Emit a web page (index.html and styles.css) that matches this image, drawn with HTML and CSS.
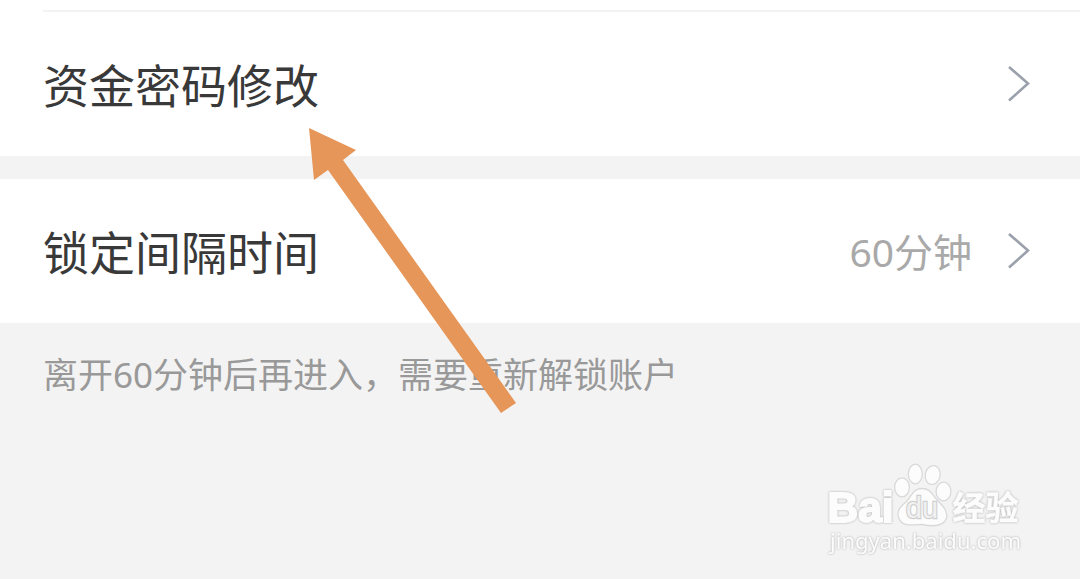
FILE: index.html
```html
<!DOCTYPE html>
<html lang="zh-CN">
<head>
<meta charset="utf-8">
<title>资金密码修改</title>
<link rel="stylesheet" href="styles.css">
</head>
<body>
<main class="screen">
  <div class="divider"></div>
  <section class="row row-password">
    <span class="title">资金密码修改</span>
    <svg class="chevron" viewBox="0 0 22 36"><path d="M1 1 20 17.5 1 34.5"/></svg>
  </section>
  <section class="row row-interval">
    <span class="title">锁定间隔时间</span>
    <span class="value">60分钟</span>
    <svg class="chevron" viewBox="0 0 22 36"><path d="M1 1 20 17.5 1 34.5"/></svg>
  </section>
  <p class="hint">离开60分钟后再进入，需要重新解锁账户</p>
  <svg class="arrow" viewBox="0 0 207 286"><path d="M0 0 47 22 34 32 207 275 192 285 19 42 5 52Z"/></svg>
  <svg class="watermark" viewBox="0 0 210 105">
    <text class="latin" x="5.500" y="62" textLength="66" lengthAdjust="spacingAndGlyphs">Bai</text>
    <g class="paw">
      <ellipse cx="80" cy="27.3" rx="7.4" ry="9.5"/>
      <ellipse cx="93.3" cy="14" rx="7" ry="9.8"/>
      <ellipse cx="110.7" cy="15" rx="7.4" ry="9.5" transform="rotate(12 110.7 15)"/>
      <ellipse cx="121.5" cy="31.5" rx="7.4" ry="9.3"/>
      <path d="M100 28.500C91 28.500 90 36 84 42C78 47 74.500 51 76.500 57C79 67 89 65 100 64.500C112 67 122 66 124.500 58C126 51 121 46 116 41C110 35 109 28.500 100 28.500Z"/>
    </g>
    <text class="du" x="84" y="58" textLength="32" lengthAdjust="spacingAndGlyphs">du</text>
    <text class="han" x="130.500" y="60" textLength="66" lengthAdjust="spacingAndGlyphs">经验</text>
    <text class="url" x="8" y="89" textLength="191" lengthAdjust="spacingAndGlyphs">jingyan.baidu.com</text>
  </svg>
</main>
</body>
</html>
```
FILE: styles.css
```css
body {
  margin: 0;
  font-family: "Noto Sans", "Noto Sans CJK SC", sans-serif;
}

.screen {
  position: relative;
  box-sizing: border-box;
  height: 579px;
  padding-top: 10px;
  overflow: hidden;
  background: linear-gradient(#fff 10px, #f3f3f3 10px);
}

.divider {
  height: 2px;
  border-left: 43px solid #fff;
  background: #f3f3f3;
}

.row {
  display: flex;
  align-items: center;
  box-sizing: border-box;
  height: 144px;
  padding: 0 50px 0 43px;
  background: #fff;
}

.row-interval {
  margin-top: 23px;
}

.title {
  flex: 1;
  padding-bottom: 3px;
  color: #393939;
  font: 46px/60px "Noto Sans CJK SC", sans-serif;
}

.value {
  margin-right: 36px;
  padding-top: 2px;
  color: #a9a9a9;
  font-size: 39px;
  line-height: 60px;
}

.chevron {
  width: 22px;
  height: 36px;
  fill: none;
  stroke: #9aa1ac;
  stroke-width: 2.6;
}

.hint {
  margin: 26px 0 0 43px;
  color: #999;
  font-size: 35px;
  line-height: 52px;
  white-space: nowrap;
}

.arrow {
  position: absolute;
  left: 309px;
  top: 128px;
  width: 207px;
  height: 286px;
  fill: #e69658;
}

.watermark {
  position: absolute;
  left: 822px;
  top: 460px;
  width: 210px;
  height: 105px;
  fill: #fcfcfc;
}

.paw {
  stroke: #d9d9d9;
  stroke-width: 1.3;
}

.latin,
.han,
.url {
  filter: drop-shadow(0 0 1px #aaa);
}

.latin {
  font: bold 42px "Liberation Sans", sans-serif;
  stroke: #fcfcfc;
  stroke-width: 2;
}

.du {
  font: 29px "Liberation Sans", sans-serif;
  fill: #f0f0f0;
  stroke: #d0d0d0;
  stroke-width: 2.4;
  paint-order: stroke;
}

.han {
  font: bold 33px "Noto Sans CJK SC", sans-serif;
  stroke: #fcfcfc;
  stroke-width: 0.5;
}

.url {
  font: 22px "Noto Sans", sans-serif;
}
```
